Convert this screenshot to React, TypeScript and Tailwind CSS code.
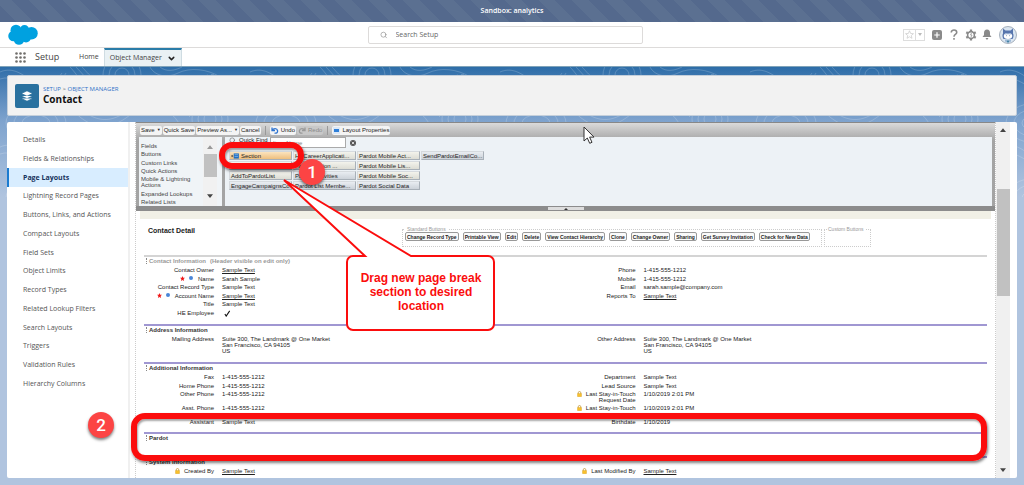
import React, { useState } from 'react';
import { ChevronDown, Layers, Search } from 'lucide-react';

type Value = { text: string; kind?: 'link' | 'check' | 'address' };
type Field = { label: string; value: Value; required?: boolean; dot?: boolean; locked?: boolean };
type Row = { left?: Field; right?: Field; tall?: boolean };

const NAV_ITEMS = [
  'Details',
  'Fields & Relationships',
  'Page Layouts',
  'Lightning Record Pages',
  'Buttons, Links, and Actions',
  'Compact Layouts',
  'Field Sets',
  'Object Limits',
  'Record Types',
  'Related Lookup Filters',
  'Search Layouts',
  'Triggers',
  'Validation Rules',
  'Hierarchy Columns',
];

const CATEGORIES = [
  'Fields',
  'Buttons',
  'Custom Links',
  'Quick Actions',
  'Mobile & Lightning Actions',
  'Expanded Lookups',
  'Related Lists',
];

// column by column, the way the palette fills up
const PALETTE = [
  { name: 'Section', tone: 'section' },
  { name: '*Blank Space', tone: 'warm' },
  { name: 'AddToPardotList', tone: 'warm' },
  { name: 'EngageCampaignsCo...', tone: 'cool' },
  { name: 'HECareerApplicati...', tone: 'warm' },
  { name: 'Pardot Action ...', tone: 'warm' },
  { name: 'Pardot Activities', tone: 'cool' },
  { name: 'Pardot List Membe...', tone: 'cool' },
  { name: 'Pardot Mobile Act...', tone: 'warm' },
  { name: 'Pardot Mobile Lis...', tone: 'warm' },
  { name: 'Pardot Mobile Soc...', tone: 'warm' },
  { name: 'Pardot Social Data', tone: 'cool' },
  { name: 'SendPardotEmailCo...', tone: 'cool' },
];

const TONES: Record<string, string> = {
  section: 'bg-linear-to-b from-[#fbe3bd] to-[#eebf7e]',
  warm: 'bg-linear-to-b from-[#f3f3ec] to-[#dcdcd4]',
  cool: 'bg-linear-to-b from-[#e9edf1] to-[#ccd2d9]',
};

const STANDARD_BUTTONS = [
  'Change Record Type',
  'Printable View',
  'Edit',
  'Delete',
  'View Contact Hierarchy',
  'Clone',
  'Change Owner',
  'Sharing',
  'Get Survey Invitation',
  'Check for New Data',
];

const sample: Value = { text: 'Sample Text' };
const link: Value = { text: 'Sample Text', kind: 'link' };
const phone: Value = { text: '1-415-555-1212' };
const stamp: Value = { text: '1/10/2019 2:01 PM' };
const address: Value = {
  text: 'Suite 300, The Landmark @ One Market\nSan Francisco, CA 94105\nUS',
  kind: 'address',
};

const CONTACT_ROWS: Row[] = [
  { left: { label: 'Contact Owner', value: link }, right: { label: 'Phone', value: phone } },
  {
    left: { label: 'Name', value: { text: 'Sarah Sample' }, required: true, dot: true },
    right: { label: 'Mobile', value: phone },
  },
  {
    left: { label: 'Contact Record Type', value: sample },
    right: { label: 'Email', value: { text: 'sarah.sample@company.com' } },
  },
  {
    left: { label: 'Account Name', value: link, required: true, dot: true },
    right: { label: 'Reports To', value: link },
  },
  { left: { label: 'Title', value: sample } },
  { left: { label: 'HE Employee', value: { text: 'Yes', kind: 'check' } } },
];

const ADDITIONAL_ROWS: Row[] = [
  { left: { label: 'Fax', value: phone }, right: { label: 'Department', value: sample } },
  { left: { label: 'Home Phone', value: phone }, right: { label: 'Lead Source', value: sample } },
  {
    left: { label: 'Other Phone', value: phone },
    right: { label: 'Last Stay-in-Touch\nRequest Date', value: stamp, locked: true },
    tall: true,
  },
  {
    left: { label: 'Asst. Phone', value: phone },
    right: { label: 'Last Stay-in-Touch', value: stamp, locked: true },
    tall: true,
  },
  {
    left: { label: 'Assistant', value: sample },
    right: { label: 'Birthdate', value: { text: '1/10/2019' } },
  },
];

const Cloud = () => (
  <svg viewBox="0 0 60 42" className="h-[21px] w-[30px]" fill="#00a1e0" aria-label="Salesforce">
    <circle cx="16" cy="12.500" r="11" />
    <circle cx="33" cy="11.500" r="9.500" />
    <circle cx="47" cy="18.500" r="12.500" />
    <circle cx="11" cy="24" r="10.500" />
    <circle cx="22" cy="31" r="10.500" />
    <circle cx="36" cy="27" r="10" />
    <path d="M12 10h28v18H12z" />
  </svg>
);

const Lock = () => (
  <svg viewBox="0 0 12 14" className="h-[6px] w-[5px] shrink-0">
    <path d="M3 7V4a3 3 0 0 1 6 0v3" fill="none" stroke="#b98a1c" strokeWidth="1.6" />
    <rect x="1" y="5.5" width="10" height="8" rx="1" fill="#f8c02c" stroke="#c98f10" strokeWidth=".7" />
  </svg>
);

const Star = () => (
  <svg viewBox="0 0 24 24" className="size-[5px]" fill="#f01818">
    <path d="m12 0 3.400 8.300 8.600.6-6.600 5.700 2.100 8.900L12 18.700l-7.500 4.800 2.100-8.900L0 8.900l8.600-.6z" />
  </svg>
);

const Avatar = () => (
  <svg viewBox="0 0 36 36" className="size-[18px]" aria-label="Profile">
    <circle cx="18" cy="18" r="17" fill="#dbe6f1" stroke="#8d99a8" strokeWidth="1.5" />
    <path d="M8 5l5 4h10l5-4v10c2 3 1 8-1 11H9c-2-3-3-8-1-11z" fill="#5775ad" />
    <ellipse cx="18" cy="20" rx="8.500" ry="6" fill="#fff" />
    <path d="M11 17c3-4 11-4 14 0-4-1-10-1-14 0z" fill="#8fa9cf" />
    <circle cx="15" cy="19.500" r=".9" fill="#35527f" />
    <circle cx="21" cy="19.500" r=".9" fill="#35527f" />
    <path d="M12 27h12v4c-4 3-8 3-12 0z" fill="#9db9d6" />
    <circle cx="18" cy="31" r="2" fill="#3d7f9f" />
  </svg>
);

// pale contour lines behind the page header
const Contours = () => (
  <svg className="absolute inset-0 h-[130px] w-full" aria-hidden="true">
    <defs>
      <pattern id="contours" width="250" height="75" patternUnits="userSpaceOnUse">
        <g fill="none" stroke="#fff" strokeOpacity=".18" strokeWidth="1">
          <path d="M0 5c14-6 24 4 32 9s22 4 30-8M0 12c12-4 22 4 30 8s26 4 36-14" />
          <path d="M70 0c6 6 10 14 16 18M76 0c6 6 10 12 16 16M82 0c5 5 8 10 14 12" />
          <circle cx="122" cy="8" r="7" />
          <circle cx="122" cy="8" r="13" />
          <circle cx="122" cy="8" r="19" />
          <path d="M150 0c4 8 16 12 28 6s30-4 42 4 22 6 30-2M160 0c6 5 14 4 22 0" />
          <path d="M200 12c10-8 20-4 26 2" strokeDasharray="3 3" />
          <ellipse cx="36" cy="56" rx="14" ry="8" />
          <ellipse cx="36" cy="56" rx="22" ry="14" />
          <ellipse cx="36" cy="56" rx="30" ry="20" />
          <path d="M70 40c20 24 40 24 60 8s40-8 50 10M74 36c22 22 38 20 56 6s44-10 60 8" />
          <circle cx="210" cy="52" r="6" />
          <circle cx="210" cy="52" r="12" />
          <circle cx="210" cy="52" r="18" />
        </g>
      </pattern>
    </defs>
    <rect width="100%" height="100%" fill="url(#contours)" />
  </svg>
);

const FieldCell: React.FC<{ field?: Field }> = ({ field }) => {
  if (!field) return <div />;
  const { label, value, required, dot, locked } = field;

  return (
    <div className="flex gap-2">
      <div className="flex w-[70px] shrink-0 items-start justify-end gap-1 whitespace-pre text-right text-[#222]">
        {required && <Star />}
        {dot && <span className="mr-px size-[4px] rounded-full bg-[#4a86d8]" />}
        {locked && <Lock />}
        <span>{label}</span>
      </div>
      {value.kind === 'link' && <a href="#" className="self-start underline">{value.text}</a>}
      {value.kind === 'check' && (
        <svg viewBox="0 0 16 16" className="ml-[2px] size-[7px]" aria-label={value.text}>
          <path d="M2 9l3 5L13 2" fill="none" stroke="#111" strokeWidth="2.4" />
        </svg>
      )}
      {value.kind === 'address' && <address className="whitespace-pre not-italic">{value.text}</address>}
      {!value.kind && <span>{value.text}</span>}
    </div>
  );
};

const Section: React.FC<{ title: string; note?: string; muted?: boolean; className: string; rows: Row[] }> = ({
  title,
  note,
  muted,
  className,
  rows,
}) => (
  <section className={`border-t-2 ${muted ? 'border-[#d4d4d4]' : 'border-[#a097d2]'} ${className}`}>
    <h3 className={`mb-[2px] flex h-2 items-center font-bold ${muted ? 'text-[#999]' : 'text-[#333]'}`}>
      <span className="mr-[2px] ml-[2px] h-[6px] border-l border-dotted border-[#888]" />
      {title}
      {note && <span className="ml-1">{note}</span>}
    </h3>
    {rows.map((row, i) => (
      <div key={i} className={`grid grid-cols-2 ${row.tall ? 'h-[14px]' : 'odd:h-2 even:h-[9px]'}`}>
        <FieldCell field={row.left} />
        <FieldCell field={row.right} />
      </div>
    ))}
  </section>
);

const ToolButton: React.FC<{ children: React.ReactNode; disabled?: boolean }> = ({ children, disabled }) => (
  <button
    disabled={disabled}
    className="flex h-[9px] items-center gap-[2px] rounded-[2px] bg-[#f4f4f4] px-px whitespace-nowrap text-[#222] disabled:bg-[#c8c8c8] disabled:text-[#888]"
  >
    {children}
  </button>
);

const Divider = () => <span className="mx-[3px] h-[9px] w-px bg-[#999]" />;

const Undo: React.FC<{ color: string; flip?: boolean }> = ({ color, flip }) => (
  <svg viewBox="0 0 16 16" className={`size-[8px] ${flip ? '-scale-x-100' : ''}`} fill="none" stroke={color} strokeWidth="2.6">
    <path d="M2 3v6h6M2.500 8.500C5 4 12 4 13 9s-3 6-6 5" />
  </svg>
);

const App: React.FC = () => {
  const [selected, setSelected] = useState('Page Layouts');
  const [query, setQuery] = useState('');

  return (
    <div className="relative flex h-screen flex-col overflow-hidden bg-[#b0c4df] font-['Open_Sans',sans-serif] text-[7px] leading-[10px] text-[#444]">
      <div className="flex h-[22px] shrink-0 items-center justify-center bg-[#54698d] bg-[repeating-linear-gradient(45deg,#54698d_0_12px,#5b7091_12px_24px)] font-semibold text-white">
        Sandbox: analytics
      </div>

      <header className="flex h-[26px] shrink-0 items-center border-b border-[#dddbda] bg-white pr-[7px] pl-2">
        <div className="flex-1">
          <Cloud />
        </div>
        <label className="mr-[14px] flex h-[18px] w-[275px] items-center gap-2 rounded-[2px] border border-[#dddbda] px-[11px]">
          <Search className="size-[8px] text-[#888]" />
          <input type="search" placeholder="Search Setup" aria-label="Search Setup" className="w-full outline-none placeholder:text-[#666]" />
        </label>
        <div className="flex flex-1 items-center justify-end text-[#8a8a8a]">
          <button className="flex h-[12px] w-[13px] items-center justify-center border border-[#ddd]" aria-label="Favorite">
            <svg viewBox="0 0 24 24" className="size-[9px]" fill="none" stroke="#ccc" strokeWidth="2">
              <path d="m12 2 3 7.200 7.500.6-5.700 4.900 1.800 7.400L12 18l-6.600 4.100 1.800-7.400L1.500 9.800 9 9.200z" />
            </svg>
          </button>
          <button className="flex h-[12px] w-[9px] items-center justify-center border border-l-0 border-[#ddd]" aria-label="Favorites list">
            <svg viewBox="0 0 8 6" className="h-[3px] w-[4px]" fill="#bbb"><path d="M0 0h8L4 6z" /></svg>
          </button>
          <button className="ml-[7px]" aria-label="Add">
            <svg viewBox="0 0 20 20" className="size-[10px]">
              <rect width="20" height="20" rx="4" fill="#8a8a8a" />
              <path d="M10 4.500v11M4.500 10h11" stroke="#fff" strokeWidth="2.400" />
            </svg>
          </button>
          <button className="ml-2" aria-label="Help">
            <svg viewBox="0 0 14 20" className="h-[11px] w-[8px]" fill="none" stroke="#8a8a8a" strokeWidth="2.800">
              <path d="M2 6.500c0-6 10-6 10 0 0 3.500-5 3.500-5 7.500M7 16.500v3" />
            </svg>
          </button>
          <button className="ml-[7px]" aria-label="Setup">
            <svg viewBox="0 0 24 24" className="size-[12px]" fill="none" stroke="#8a8a8a">
              <circle cx="12" cy="12" r="6.800" strokeWidth="3.200" />
              <path d="M12 1v4M12 19v4M2.500 6.500 6 8.500M18 15.500l3.500 2M2.500 17.500l3.500-2M18 8.500l3.500-2" strokeWidth="4.500" />
              <path d="M13 8l-2 4h3l-2 4" strokeWidth="1.500" />
            </svg>
          </button>
          <button className="ml-[5px]" aria-label="Notifications">
            <svg viewBox="0 0 20 22" className="h-[11px] w-[10px]" fill="#8a8a8a">
              <path d="M10 1c4 0 6 3 6 7v4l3 4H1l3-4V8c0-4 2-7 6-7zM7.500 18h5c0 4-5 4-5 0z" />
            </svg>
          </button>
          <button className="ml-[7px]"><Avatar /></button>
        </div>
      </header>

      <nav className="flex h-[19px] shrink-0 items-stretch border-b border-[#7fa3ba] bg-white">
        <div className="flex w-[79px] items-center gap-[9px] pl-[15px]">
          <svg viewBox="0 0 22 22" className="size-[11px]" fill="#706e6b" aria-label="App Launcher">
            {[3, 11, 19].map((y) => [3, 11, 19].map((x) => <circle key={`${x}-${y}`} cx={x} cy={y} r="2.600" />))}
          </svg>
          <span className="text-[9px]">Setup</span>
        </div>
        <a href="#" className="flex items-center pr-[5px]">Home</a>
        <a href="#" className="flex w-[78px] items-center justify-between border-x border-t-2 border-x-[#cfdce2] border-t-[#2a7ca8] bg-[#e9f1f4] px-[5px]">
          Object Manager
          <ChevronDown className="size-[9px] text-[#222]" strokeWidth={4} />
        </a>
      </nav>

      <div className="relative flex min-h-0 flex-1 flex-col bg-linear-to-b from-[#2d6da8] via-[#7ea3ce] via-[54px] to-[#b0c4df] to-[130px] px-[7px] pt-2 pb-[7px]">
        <Contours />

        <div className="relative flex h-[41px] shrink-0 items-center gap-1 rounded-[2px] border border-[#c4cfdb] bg-[#f2f2f2] px-[7px]">
          <div className="flex size-[24px] items-center justify-center rounded-[2px] bg-[#29719f] text-white">
            <Layers className="size-[12px]" fill="currentColor" stroke="#29719f" strokeWidth={1.5} />
          </div>
          <div>
            <div className="text-[6px] leading-2 text-[#3272c8]">
              <a href="#">SETUP</a> <span className="text-[#555]">&gt;</span> <a href="#">OBJECT MANAGER</a>
            </div>
            <h1 className="text-[10px] leading-[13px] font-bold text-[#111]">Contact</h1>
          </div>
        </div>

        <div className="relative mt-[6px] flex min-h-0 flex-1 overflow-hidden rounded-[2px] bg-white pr-[7px]">
          <aside className="w-[123px] shrink-0 border-r-2 border-[#f0f0f0] pt-2">
            {NAV_ITEMS.map((item) => (
              <button
                key={item}
                onClick={() => setSelected(item)}
                className={`flex h-[19px] w-full items-center border-l-2 pl-[14px] text-left nth-[4n]:h-[18px] ${
                  item === selected
                    ? 'border-[#1b7bd0] bg-[#d8edff] font-bold text-[#16325c]'
                    : 'border-transparent text-[#555]'
                }`}
              >
                {item}
              </button>
            ))}
          </aside>

          <main className="ml-[5px] min-w-0 flex-1 overflow-hidden border-x border-dotted border-[#ccc] font-['Liberation_Sans',sans-serif] text-[6px] leading-[6px] text-[#222]">
            <div className="border-t border-[#888] bg-linear-to-b from-[#dadada] to-[#a4a4a4] to-[18px] px-[3px]">
              <div className="flex h-[14px] items-center gap-px px-px">
                <ToolButton>Save <span className="text-[4px]">▼</span></ToolButton>
                <ToolButton>Quick Save</ToolButton>
                <ToolButton>Preview As... <span className="text-[4px]">▼</span></ToolButton>
                <ToolButton>Cancel</ToolButton>
                <Divider />
                <ToolButton><Undo color="#2f74d0" /> Undo</ToolButton>
                <ToolButton disabled><Undo color="#999" flip /> Redo</ToolButton>
                <Divider />
                <ToolButton>
                  <svg viewBox="0 0 14 14" className="size-[7px]">
                    <rect width="14" height="14" fill="#dce8f6" />
                    <rect x="2" y="4" width="10" height="6" fill="#2e7fd8" />
                  </svg>
                  Layout Properties
                </ToolButton>
              </div>

              <div className="flex h-[69px] gap-[3px]">
                <div className="flex w-[83px] shrink-0 justify-between bg-[#f0f4f7] pr-[5px]">
                  <ul className="flex w-[60px] flex-col justify-between pt-[6px] pb-px pl-[2px] text-[#444]">
                    {CATEGORIES.map((c) => <li key={c} className="hover:underline">{c}</li>)}
                  </ul>
                  <div className="flex w-[14px] flex-col items-center bg-[#f1f1f1] py-[8px]">
                    <svg viewBox="0 0 8 5" className="h-[4px] w-[6px]" fill="#999"><path d="M0 5h8L4 0z" /></svg>
                    <span className="mt-[5px] h-[23px] w-[13px] bg-[#c1c1c1]" />
                    <svg viewBox="0 0 8 5" className="mt-auto h-[4px] w-[6px]" fill="#444"><path d="M0 0h8L4 5z" /></svg>
                  </div>
                </div>

                <div className="min-w-0 flex-1 bg-[#edf2f6] pl-[4px]">
                  <label className="mb-px flex h-[13px] items-start gap-[3px]">
                    <Search className="size-[7px] text-[#666]" />
                    <span className="w-[28px] leading-[7px] whitespace-nowrap">Quick Find</span>
                    <input
                      value={query}
                      onChange={(e) => setQuery(e.target.value)}
                      placeholder="Item Name"
                      className="h-[11px] w-[76px] border border-[#aaa] bg-white px-[2px] outline-none placeholder:text-[#888]"
                    />
                    <svg viewBox="0 0 12 12" className="m-px mt-[3px] size-[6px]">
                      <circle cx="6" cy="6" r="6" fill="#555" />
                      <path d="M3.500 3.500l5 5m0-5l-5 5" stroke="#fff" strokeWidth="1.500" />
                    </svg>
                  </label>
                  <div className="grid w-[255px] grid-flow-col grid-cols-4 grid-rows-4 gap-px">
                    {PALETTE.map((p) => (
                      <button
                        key={p.name}
                        className={`flex h-[9px] items-center gap-[2px] border border-t-[#d6dade] border-r-[#a8b0b8] border-b-[#a8b0b8] border-l-[#d6dade] pl-px whitespace-nowrap ${TONES[p.tone]}`}
                      >
                        {p.tone === 'section' && (
                          <svg viewBox="0 0 18 14" className="h-[6px] w-[8px]">
                            <path d="M0 7h5M2.500 4.500v5" stroke="#333" strokeWidth="1.500" />
                            <rect x="6" y="1" width="12" height="12" fill="#1f6fc4" />
                            <path d="M8 4h8M8 8h8" stroke="#9cc6f0" strokeWidth="1.500" />
                          </svg>
                        )}
                        {p.name}
                      </button>
                    ))}
                  </div>
                </div>
              </div>
              <div className="-mx-[3px] flex h-[5px] items-center justify-center bg-[#8c8c8c]">
                <span className="flex h-[3px] w-[36px] items-center justify-center bg-[#ddd]">
                  <svg viewBox="0 0 8 4" className="h-[2px] w-[4px]" fill="#333"><path d="M0 4h8L4 0z" /></svg>
                </span>
              </div>
            </div>

            <div className="mx-[4px] h-2 bg-[#f1f0e6]" />

            <div className="px-2">
              <div className="flex h-[36px] items-start justify-between pt-[7px] pr-[116px] pl-[4px]">
                <h2 className="pt-px text-[7px] leading-[8px] font-bold">Contact Detail</h2>
                <div className="flex gap-[2px]">
                  <fieldset className="h-[21px] w-[420px] border border-dotted border-[#ccc] px-[2px]">
                    <legend className="px-[2px] text-[5px] leading-[6px] text-[#999]">Standard Buttons</legend>
                    <div className="flex gap-1">
                      {STANDARD_BUTTONS.map((b) => (
                        <button key={b} className="h-[9px] rounded-[2px] border border-[#999] bg-[#fafafa] px-px text-[5px] font-bold whitespace-nowrap">
                          {b}
                        </button>
                      ))}
                    </div>
                  </fieldset>
                  <fieldset className="h-[21px] w-[47px] border border-dotted border-[#ccc] px-[2px]">
                    <legend className="px-px text-[5px] leading-[6px] whitespace-nowrap text-[#999]">Custom Buttons</legend>
                  </fieldset>
                </div>
              </div>

              <Section title="Contact Information" note="(Header visible on edit only)" muted className="pb-[6px]" rows={CONTACT_ROWS} />
              <Section
                title="Address Information"
                className="pb-[17px]"
                rows={[
                  {
                    left: { label: 'Mailing Address', value: address },
                    right: { label: 'Other Address', value: address },
                  },
                ]}
              />
              <Section title="Additional Information" className="pb-1" rows={ADDITIONAL_ROWS} />
              <Section title="Pardot" className="pb-[12px]" rows={[]} />
              <Section
                title="System Information"
                className=""
                rows={[
                  {
                    left: { label: 'Created By', value: link, locked: true },
                    right: { label: 'Last Modified By', value: link, locked: true },
                  },
                ]}
              />
            </div>
          </main>

          <div className="flex w-[14px] shrink-0 flex-col items-center bg-[#f0f0f0] py-[6px]">
            <svg viewBox="0 0 8 5" className="h-[4px] w-[6px]" fill="#444"><path d="M0 5h8L4 0z" /></svg>
            <span className="mt-[57px] h-[107px] w-[13px] bg-[#c1c1c1]" />
            <svg viewBox="0 0 8 5" className="mt-auto h-[4px] w-[6px]" fill="#444"><path d="M0 0h8L4 5z" /></svg>
          </div>
        </div>
      </div>

      {/* annotations */}
      <div className="absolute top-[142px] left-[219px] h-[27px] w-[85px] rounded-[13px] border-[6px] border-[#fb0d0d] shadow-[1px_2px_3px_rgba(0,0,0,.5),inset_1px_2px_2px_rgba(0,0,0,.35)]" />
      <div className="absolute top-[413px] right-[37px] left-[131px] h-[48px] rounded-[14px] border-[6px] border-[#fb0d0d] shadow-[1px_2px_3px_rgba(0,0,0,.5),inset_1px_2px_2px_rgba(0,0,0,.35)]" />

      <div className="absolute top-[178px] left-[282px] h-[156px] w-[216px] font-['Liberation_Sans',sans-serif]">
        <svg viewBox="0 0 216 156" className="absolute inset-0 h-full w-full">
          <path
            d="M2 2 83 78H71a6 6 0 0 0-6 6v62a6 6 0 0 0 6 6h135a6 6 0 0 0 6-6V84a6 6 0 0 0-6-6h-77z"
            fill="#fff"
            stroke="#fb0d0d"
            strokeWidth="2"
          />
        </svg>
        <p className="absolute top-[77px] left-[65px] flex h-[74px] w-[148px] items-center justify-center px-2 text-center text-[12px] leading-[14px] font-bold text-[#fb0d0d]">
          Drag new page break section to desired location
        </p>
      </div>

      <span className="absolute top-[159px] left-[299px] flex size-[26px] items-center justify-center rounded-full bg-[#fc4444] font-['Roboto',sans-serif] text-[17px] font-medium text-white shadow-[0_2px_3px_rgba(0,0,0,.5)]">
        1
      </span>
      <span className="absolute top-[412px] left-[88px] flex size-[26px] items-center justify-center rounded-full bg-[#fc4444] font-['Roboto',sans-serif] text-[17px] font-medium text-white shadow-[0_2px_3px_rgba(0,0,0,.5)]">
        2
      </span>

      <svg viewBox="0 0 12 18" className="absolute top-[126px] left-[583px] h-[18px] w-[12px]">
        <path d="M1 1v14l3.300-3 2.400 5.300 2.300-1-2.400-5.200H11z" fill="#fff" stroke="#333" />
      </svg>
    </div>
  );
};

export default App;
